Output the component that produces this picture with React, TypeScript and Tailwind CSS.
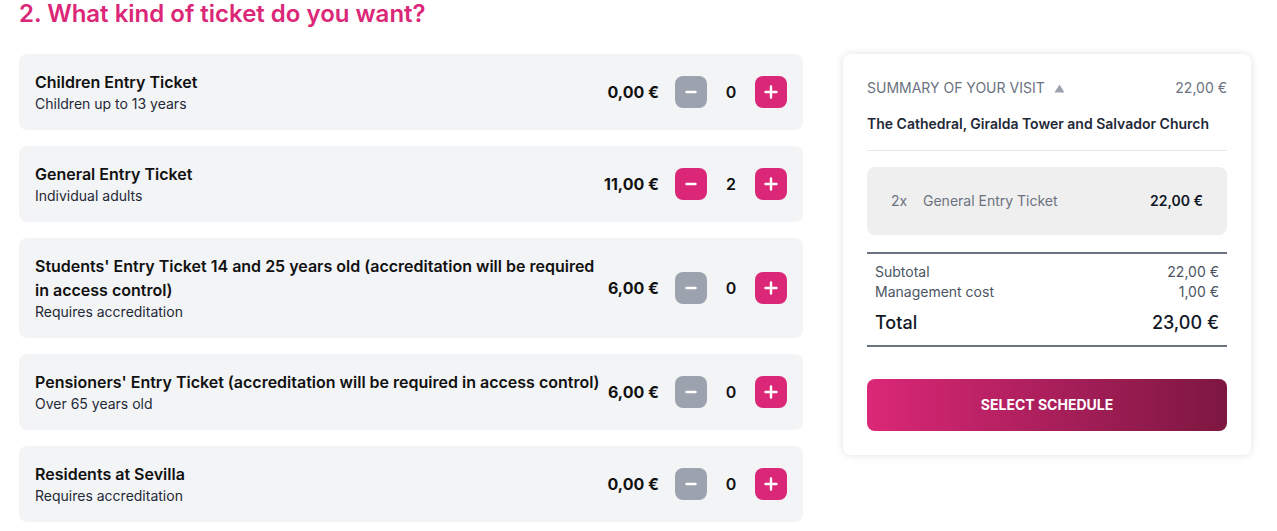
import React from "react";

interface TicketProps {
  title: string;
  subtitle: string;
  price: string;
  count: number;
}

const tickets: TicketProps[] = [
  { title: "Children Entry Ticket", subtitle: "Children up to 13 years", price: "0,00 €", count: 0 },
  { title: "General Entry Ticket", subtitle: "Individual adults", price: "11,00 €", count: 2 },
  {
    title: "Students' Entry Ticket 14 and 25 years old (accreditation will be required in access control)",
    subtitle: "Requires accreditation",
    price: "6,00 €",
    count: 0,
  },
  {
    title: "Pensioners' Entry Ticket (accreditation will be required in access control)",
    subtitle: "Over 65 years old",
    price: "6,00 €",
    count: 0,
  },
  { title: "Residents at Sevilla", subtitle: "Requires accreditation", price: "0,00 €", count: 0 },
];

const TicketRow: React.FC<TicketProps> = ({ title, subtitle, price, count }) => {
  return (
    <div className="flex items-center gap-2 rounded-lg bg-[#f3f4f6] px-4 py-4">
      {/* name & description */}
      <div className="flex-1">
        <h3 className="text-base leading-6 font-semibold text-[#111111]">{title}</h3>
        <p className="text-sm leading-5 text-[#1f2937]">{subtitle}</p>
      </div>

      {/* price & counter */}
      <div className="flex items-center">
        <span className="mr-4 text-base font-bold text-[#111111]">{price}</span>
        <button
          className={`flex h-8 w-8 items-center justify-center rounded-lg text-white ${
            count > 0 ? "bg-[#db2777]" : "bg-[#9ca3af]"
          }`}
        >
          <svg width="14" height="14" viewBox="0 0 14 14">
            <path d="M2.5 7h9" stroke="white" strokeWidth="2.4" strokeLinecap="round" />
          </svg>
        </button>
        <span className="w-12 text-center text-base font-semibold text-[#111111]">{count}</span>
        <button className="flex h-8 w-8 items-center justify-center rounded-lg bg-[#db2777] text-white">
          <svg width="14" height="14" viewBox="0 0 14 14">
            <path d="M1.5 7h11M7 1.5v11" stroke="white" strokeWidth="2.4" strokeLinecap="round" />
          </svg>
        </button>
      </div>
    </div>
  );
};

const Summary = () => {
  return (
    <aside className="w-[408px] shrink-0 self-start rounded-lg bg-white p-6 shadow-[0_0_8px_rgba(0,0,0,0.12)]">
      <div className="flex items-center justify-between text-sm leading-5 text-[#6b7280]">
        <span className="flex items-center gap-[9px]">
          SUMMARY OF YOUR VISIT
          <svg width="11" height="9" viewBox="0 0 11 9">
            <path d="M5.5 0.5L10.5 8.5H0.5Z" fill="#9ca3af" />
          </svg>
        </span>
        <span>22,00 €</span>
      </div>

      <p className="mt-4 border-b border-[#e5e7eb] pb-4 text-sm leading-5 font-semibold text-[#1f2937]">
        The Cathedral, Giralda Tower and Salvador Church
      </p>

      <div className="mt-4 flex items-center rounded-lg bg-[#efefef] px-6 py-6 text-sm leading-5">
        <span className="w-8 text-[#6b7280]">2x</span>
        <span className="flex-1 text-[#6b7280]">General Entry Ticket</span>
        <span className="font-semibold text-[#111827]">22,00 €</span>
      </div>

      {/* totals */}
      <div className="mt-[17px] border-y-2 border-[#6b7280] px-2 pt-2 pb-2">
        <div className="flex justify-between text-sm leading-5 text-[#4b5563]">
          <span>Subtotal</span>
          <span>22,00 €</span>
        </div>
        <div className="flex justify-between text-sm leading-5 text-[#4b5563]">
          <span>Management cost</span>
          <span>1,00 €</span>
        </div>
        <div className="mt-[7px] flex justify-between text-lg leading-7 font-medium text-[#111827]">
          <span>Total</span>
          <span>23,00 €</span>
        </div>
      </div>

      <button className="mt-8 h-[52px] w-full rounded-lg bg-gradient-to-r from-[#db2777] to-[#7d1741] text-sm font-bold text-white">
        SELECT SCHEDULE
      </button>
    </aside>
  );
};

export default function App() {
  return (
    <div className="min-h-screen bg-white pl-[19px] pr-[26px] font-['Inter',sans-serif]">
      <h2 className="mb-[26px] text-2xl leading-7 font-semibold text-[#db2777]">
        2. What kind of ticket do you want?
      </h2>
      <div className="flex items-start gap-10">
        <div className="flex flex-1 flex-col gap-4">
          {tickets.map((ticket, idx) => (
            <TicketRow key={idx} {...ticket} />
          ))}
        </div>
        <Summary />
      </div>
    </div>
  );
}
